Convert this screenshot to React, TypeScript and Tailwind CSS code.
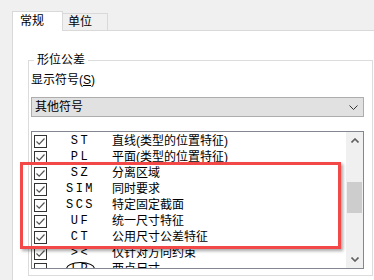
import React from 'react';

const rows = [
  { code: 'ST', text: '直线(类型的位置特征)', checked: true },
  { code: 'PL', text: '平面(类型的位置特征)', checked: true },
  { code: 'SZ', text: '分离区域', checked: true },
  { code: 'SIM', text: '同时要求', checked: true },
  { code: 'SCS', text: '特定固定截面', checked: true },
  { code: 'UF', text: '统一尺寸特征', checked: true },
  { code: 'CT', text: '公用尺寸公差特征', checked: true },
  { code: '><', text: '仅针对方向约束', checked: true },
  { code: 'LP', text: '两点尺寸', checked: false, circled: true },
];

const CheckBox = ({ checked }: { checked: boolean }) => (
  <svg width="13" height="13" viewBox="0 0 13 13" className="shrink-0">
    <rect x="0.5" y="0.5" width="12" height="12" fill="#fff" stroke="#333" />
    {checked && <path d="M2.5 6.5 L5.2 9.2 L10.5 3.5" fill="none" stroke="#555" strokeWidth="1.2" />}
  </svg>
);

const App = () => {
  return (
    <div className="relative w-[374px] h-[280px] overflow-hidden bg-[#f0f0f0] text-[12px] text-black font-['Liberation_Sans','Noto_Sans_CJK_SC',sans-serif]">
      {/* Tabs */}
      <div className="flex items-end h-[30px] pl-[12px]">
        <div className="relative z-10 -mb-px h-[20px] w-[51px] border border-b-0 border-[#d9d9d9] bg-white pl-[7px] leading-[18px]">
          常规
        </div>
        <div className="h-[17px] w-[45px] border border-l-0 border-b-0 border-[#d9d9d9] bg-[#f0f0f0] pl-[5px] leading-[17px]">
          单位
        </div>
      </div>

      {/* Panel */}
      <div className="ml-[12px] h-[250px] border-t border-l border-[#d9d9d9] bg-white">
        <fieldset className="ml-[15px] mt-[22px] w-[345px] border border-[#dcdcdc]">
          <legend className="ml-[5px] px-[3px] leading-[14px]">形位公差</legend>
          <div className="pl-[2px] mt-[5px] leading-[16px]">
            显示符号(<span className="underline">S</span>)
          </div>

          {/* Select */}
          <div className="ml-[2px] mt-[9px] flex h-[20px] w-[333px] items-center justify-between border border-[#adadad] bg-[#e1e1e1] pl-[3px] pr-[5px] leading-[18px]">
            <span>其他符号</span>
            <svg width="9" height="5" viewBox="0 0 9 5">
              <path d="M0.5 0.5 L4.5 4.5 L8.5 0.5" fill="none" stroke="#333" strokeWidth="1" />
            </svg>
          </div>

          {/* List */}
          <div className="ml-[2px] mt-[14px] mb-[6px] flex h-[138px] w-[333px] border border-[#828790] bg-white">
            <div className="flex-1 overflow-hidden pt-px">
              {rows.map((r, i) => (
                <div key={i} className="flex h-[16px] items-center pl-[2px]">
                  <CheckBox checked={r.checked} />
                  <div className="flex w-[65px] justify-center pl-[2px]">
                    {r.circled ? (
                      <span className="rounded-[50%] border border-black px-[4px] font-['Liberation_Mono',monospace] leading-[12px] tracking-[2px]">
                        LP
                      </span>
                    ) : (
                      <span className="font-['Liberation_Mono',monospace] leading-[16px] tracking-[2.5px]">{r.code}</span>
                    )}
                  </div>
                  <span className="whitespace-nowrap leading-[16px]">{r.text}</span>
                </div>
              ))}
            </div>

            {/* Scrollbar */}
            <div className="flex w-[17px] flex-col bg-[#f0f0f0]">
              <div className="flex h-[17px] items-center justify-center">
                <svg width="8" height="5" viewBox="0 0 8 5">
                  <path d="M0.5 4.5 L4 1 L7.5 4.5" fill="none" stroke="#606060" strokeWidth="1.6" />
                </svg>
              </div>
              <div className="flex-1">
                <div className="mx-px mt-[33px] h-[31px] bg-[#cdcdcd]" />
              </div>
              <div className="flex h-[17px] items-center justify-center">
                <svg width="8" height="5" viewBox="0 0 8 5">
                  <path d="M0.5 0.5 L4 4 L7.5 0.5" fill="none" stroke="#606060" strokeWidth="1.6" />
                </svg>
              </div>
            </div>
          </div>
        </fieldset>
      </div>

      {/* Red highlight */}
      <div className="absolute left-[20px] top-[162px] h-[87px] w-[321px] border-[3px] border-[#f24848] shadow-[2px_2px_3px_rgba(0,0,0,0.35)]" />
    </div>
  );
};

export default App;
